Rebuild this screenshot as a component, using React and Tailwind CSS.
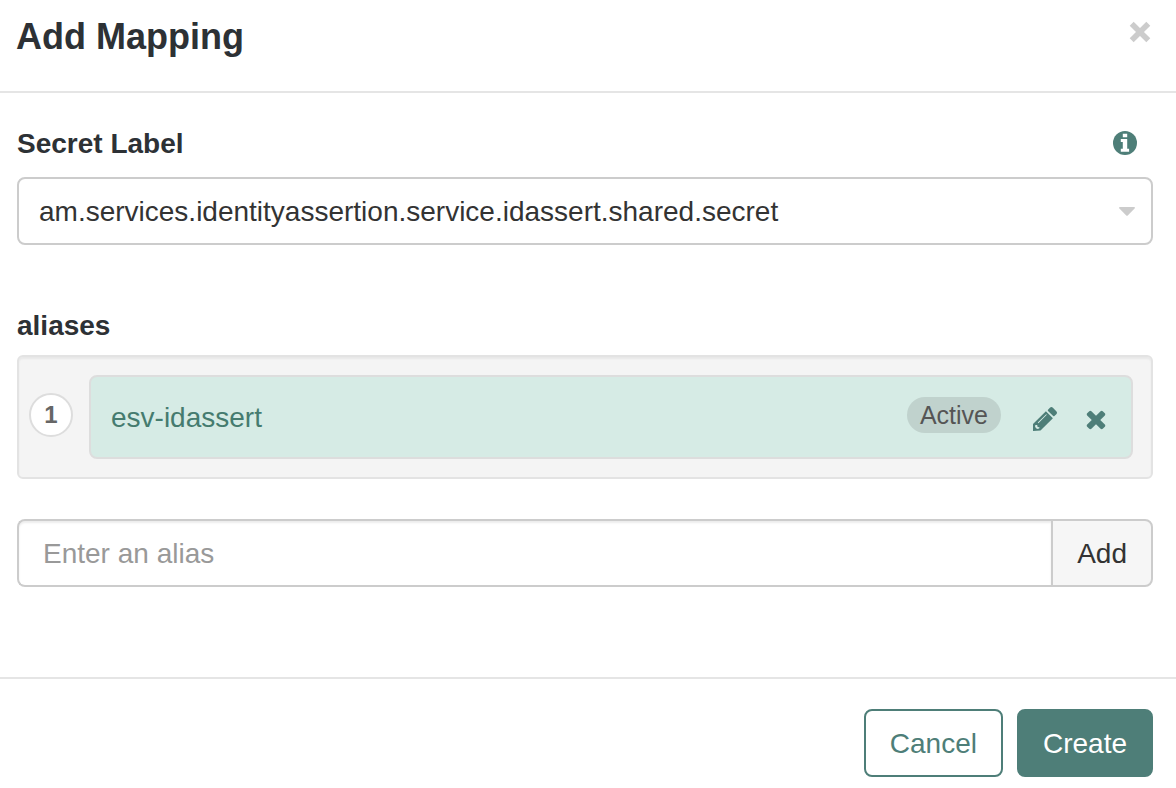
import React, { useState } from "react";

const TIMES =
  "M1490 1322q0 40-28 68l-136 136q-28 28-68 28t-68-28l-294-294-294 294q-28 28-68 28t-68-28l-136-136q-28-28-28-68t28-68l294-294-294-294q-28-28-28-68t28-68l136-136q28-28 68-28t68 28l294 294 294-294q28-28 68-28t68 28l136 136q28 28 28 68t-28 68l-294 294 294 294q28 28 28 68z";

function PencilIcon() {
  return (
    <svg viewBox="0 0 24 24" className="mx-[2px] size-6" fill="currentColor" aria-hidden="true">
      <path d="M15 2.700L16.900 .8q1.500-1.400 3 0l3.400 3.400q1.400 1.500 0 3l-1.900 1.900q-.6.5-1.200 0l-5.200-5.200q-.5-.6 0-1.200z" />
      <path
        fillRule="evenodd"
        d="M12.900 4.200l7 7L7.500 23.600 0 24v-7zM13.200 7.200l-8.400 8.400.6.6 8.400-8.400zM2.300 18l-.2 2 1.900 1.900 2.200-.3.300-1.300-1.900-.4-.4-1.900z"
      />
    </svg>
  );
}

function TimesIcon() {
  return (
    <svg viewBox="0 0 1792 1792" className="size-7" fill="currentColor" aria-hidden="true">
      <path d={TIMES} />
    </svg>
  );
}

function InfoIcon() {
  return (
    <svg viewBox="0 0 24 24" className="size-6" aria-hidden="true">
      <circle cx="12" cy="12" r="12" fill="currentColor" />
      <path d="M9.800 2.700h4.400v3.500H9.800zM7.800 8h6.400v9.700h1.900v3H7.800v-3h2V11h-2z" fill="#ffffff" />
    </svg>
  );
}

function AliasRow({ index, name }) {
  return (
    <li className="flex items-center gap-4">
      <span className="mb-1 flex size-11 shrink-0 items-center justify-center rounded-full border-2 border-[#dddddd] bg-white text-2xl font-bold text-[#666666]">
        {index}
      </span>
      <div className="flex h-[84px] grow items-center rounded-lg border-2 border-[#dddddd] bg-[#d6ebe5] pr-[21px] pl-5 text-[#457b6f]">
        <span className="grow pt-[2px]">{name}</span>
        <span className="mb-1 rounded-full bg-[#c0d2cd] px-[13px] text-[25px] leading-9 text-[#555555]">
          Active
        </span>
        <button type="button" aria-label="Edit alias" className="mt-1 ml-[30px] text-[#4e7e78]">
          <PencilIcon />
        </button>
        <button type="button" aria-label="Remove alias" className="mt-1 ml-[23px] text-[#4e7e78]">
          <TimesIcon />
        </button>
      </div>
    </li>
  );
}

export default function App() {
  const [alias, setAlias] = useState("");
  return (
    <div
      role="dialog"
      aria-labelledby="title"
      className="bg-white font-['Liberation_Sans',Arial,sans-serif] text-[28px] leading-10 text-[#333333]"
    >
      <header className="flex items-start justify-between border-b-2 border-[#e5e5e5] pt-[17px] pr-6 pb-[34px] pl-4">
        <h1 id="title" className="text-4xl leading-10 font-bold text-[#2d3135]">
          Add Mapping
        </h1>
        <button type="button" aria-label="Close" className="mt-[3px] text-[#cccccc]">
          <svg viewBox="0 0 24 24" className="size-6" stroke="currentColor" strokeWidth="5.6" aria-hidden="true">
            <path d="M3.700 3.700l16.600 16.600M20.300 3.700l-16.600 16.600" />
          </svg>
        </button>
      </header>

      <main className="pt-[31px] pr-[23px] pb-[90px] pl-[17px]">
        <div className="mb-[13px] flex items-center justify-between pr-4">
          <label htmlFor="secret" className="font-bold text-[#2d3135]">
            Secret Label
          </label>
          <button type="button" aria-label="Secret label information" className="mb-[2px] text-[#4e7e78]">
            <InfoIcon />
          </button>
        </div>
        <div className="relative">
          <select
            id="secret"
            className="block h-[68px] w-full appearance-none rounded-lg border-2 border-[#cccccc] bg-white pt-[2px] pr-14 pl-5"
          >
            <option>am.services.identityassertion.service.idassert.shared.secret</option>
          </select>
          <svg
            viewBox="0 0 16 9"
            className="pointer-events-none absolute top-[30px] right-[18px] h-[9px] w-4"
            fill="#cccccc"
            aria-hidden="true"
          >
            <path d="M0.8 0h14.4q1.2 0.3 0.4 1.5L9 8.3q-1 1-2 0L0.4 1.5Q-0.4 0.3 0.8 0z" />
          </svg>
        </div>

        <label htmlFor="alias" className="mt-[61px] mb-[9px] block font-bold text-[#2d3135]">
          aliases
        </label>
        <ol className="rounded-md border-2 border-[#e3e3e3] bg-[#f4f4f4] py-[18px] pr-[18px] pl-[10px] shadow-[inset_0_2px_2px_rgba(0,0,0,0.05)]">
          <AliasRow index={1} name="esv-idassert" />
        </ol>

        <div className="mt-10 flex h-[68px]">
          <input
            id="alias"
            type="text"
            value={alias}
            onChange={(e) => setAlias(e.target.value)}
            placeholder="Enter an alias"
            className="min-w-0 grow rounded-l-lg border-2 border-r-0 border-[#cccccc] bg-white px-6 pt-[2px] shadow-[inset_0_2px_2px_rgba(0,0,0,0.075)] placeholder:text-[#999999]"
          />
          <button type="button" className="rounded-r-lg border-2 border-[#cccccc] bg-[#f6f6f6] px-6 pt-[2px]">
            Add
          </button>
        </div>
      </main>

      <footer className="flex justify-end gap-[14px] border-t-2 border-[#e5e5e5] pt-[30px] pr-[23px] pb-[11px]">
        <button type="button" className="h-[68px] rounded-lg border-2 border-[#4e7e78] bg-white px-6 pt-[2px] text-[#4e7e78]">
          Cancel
        </button>
        <button type="button" className="h-[68px] rounded-lg border-2 border-[#4e7e78] bg-[#4e7e78] px-6 pt-[2px] text-white">
          Create
        </button>
      </footer>
    </div>
  );
}
